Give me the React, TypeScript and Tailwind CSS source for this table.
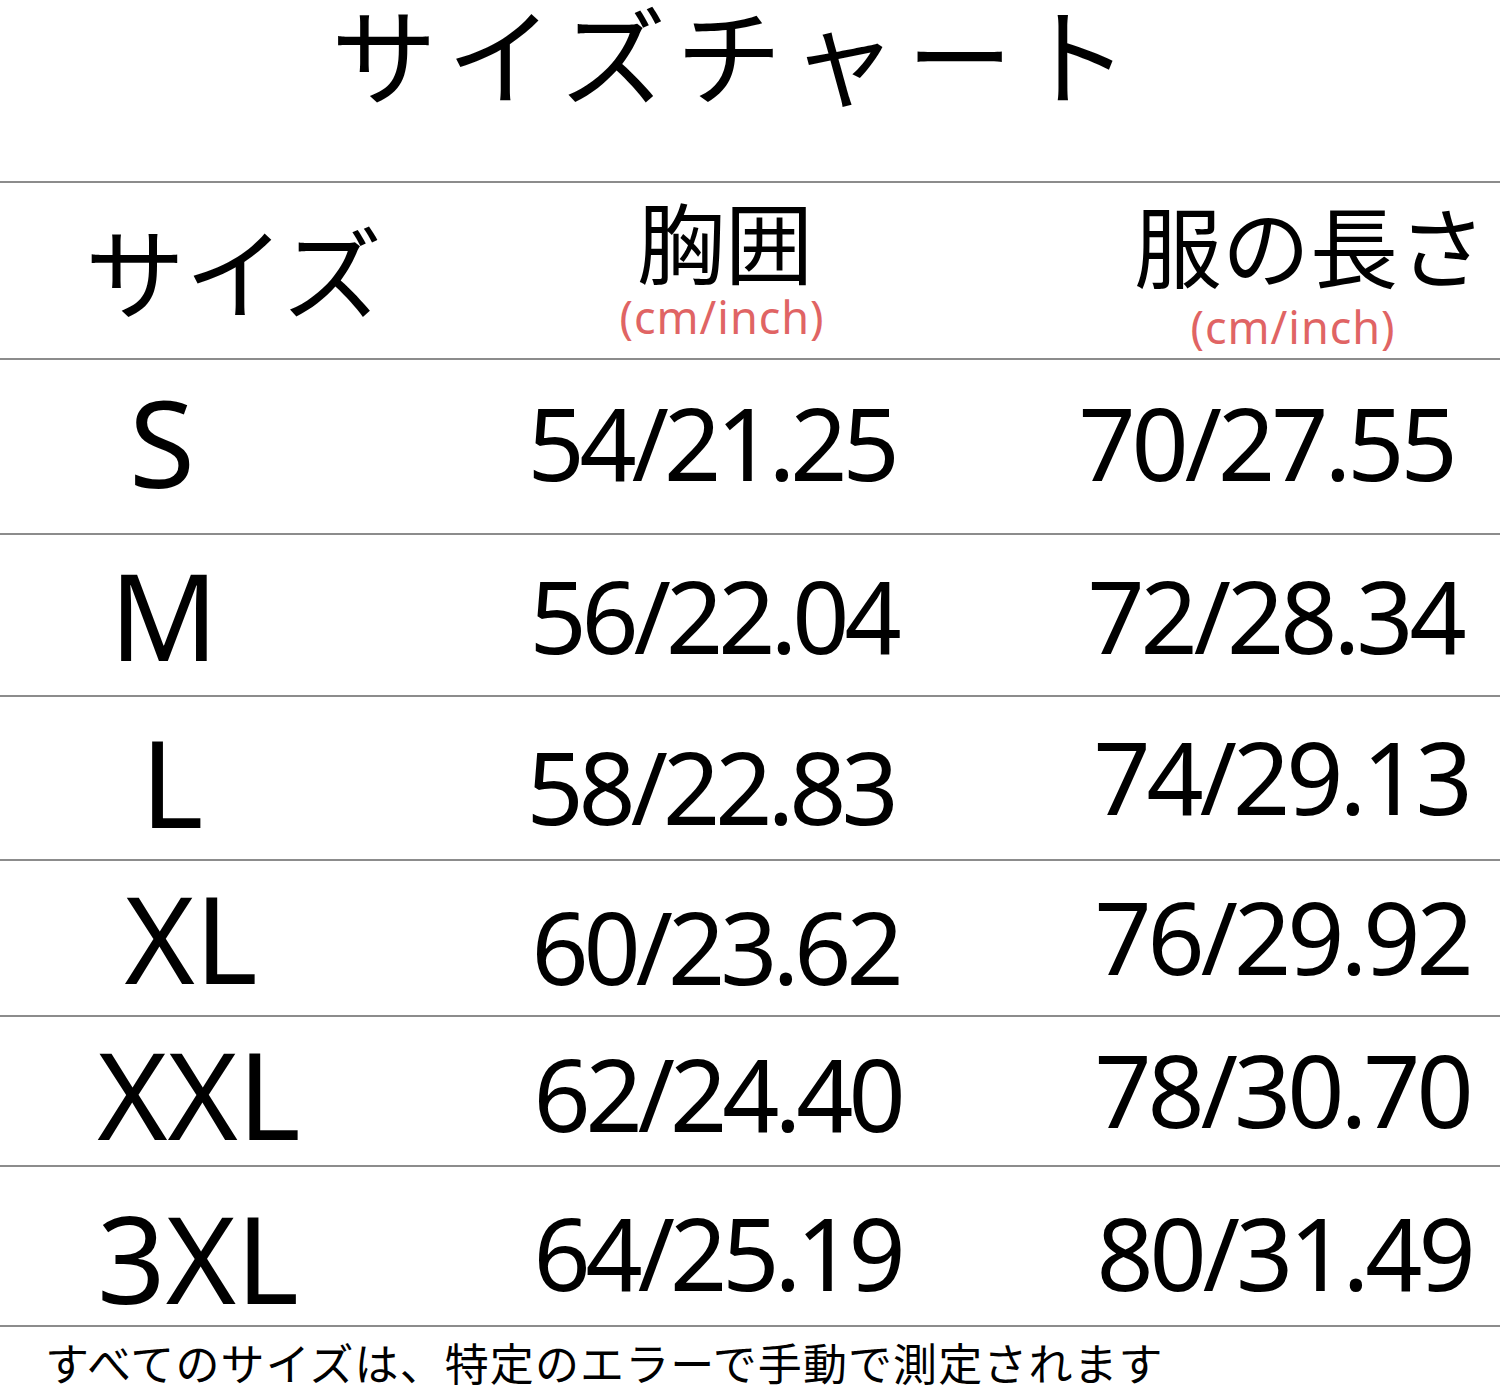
const jp = { fontFamily: '"Noto Sans CJK JP", sans-serif' };
const latin = { fontFamily: '"Noto Sans", sans-serif' };

type Row = { size: string; chest: string; length: string; h: string; sizeCls: string; chestCls: string; lenCls: string };

const rows: Row[] = [
  { size: 'S', chest: '54/21.25', length: '70/27.55', h: 'h-[173px]', sizeCls: 'pb-[10px]', chestCls: 'pb-[10px] pr-[8px]', lenCls: 'pb-[10px] pr-[38px]' },
  { size: 'M', chest: '56/22.04', length: '72/28.34', h: 'h-[160px]', sizeCls: 'pl-[4px]', chestCls: 'pr-[4px]', lenCls: 'pr-[20px]' },
  { size: 'L', chest: '58/22.83', length: '74/29.13', h: 'h-[162px]', sizeCls: 'pl-[20px] pt-[8px]', chestCls: 'pt-[16px] pr-[10px]', lenCls: 'pb-[4px] pr-[8px]' },
  { size: 'XL', chest: '60/23.62', length: '76/29.92', h: 'h-[154px]', sizeCls: 'pl-[58px]', chestCls: 'pt-[16px]', lenCls: 'pb-[4px] pr-[6px]' },
  { size: 'XXL', chest: '62/24.40', length: '78/30.70', h: 'h-[148px]', sizeCls: 'pl-[74px] pt-[6px]', chestCls: 'pt-[4px] pl-[4px]', lenCls: 'pb-[4px] pr-[6px]' },
  { size: '3XL', chest: '64/25.19', length: '80/31.49', h: 'h-[158px]', sizeCls: 'pl-[72px] pt-[24px]', chestCls: 'pt-[12px] pl-[4px]', lenCls: 'pt-[12px] pr-[2px]' },
];

function Line() {
  return <div className="h-[2px] w-full bg-[#8c8c8c]" />;
}

export default function App() {
  return (
    <div className="w-[1500px] h-[1389px] bg-white text-black overflow-hidden">
      {/* title */}
      <div className="h-[181px] flex justify-center pr-[30px]">
        <h1 style={jp} className="text-[106px] leading-[110px] tracking-[10px] font-normal -mt-[4px]">
          サイズチャート
        </h1>
      </div>
      <Line />

      {/* header row */}
      <div className="grid grid-cols-[360px_710px_430px] h-[175px]">
        <div style={jp} className="flex items-center justify-start pl-[85px] text-[100px] leading-none whitespace-nowrap pb-[4px]">
          サイズ
        </div>
        <div className="flex flex-col items-center pl-[20px] pt-[8px]">
          <div style={jp} className="text-[88px] leading-[96px]">胸囲</div>
          <div style={latin} className="text-[45px] leading-[48px] text-[#e06464] tracking-[1px] mt-[6px] pr-[6px]">
            (cm/inch)
          </div>
        </div>
        <div className="flex flex-col items-center pl-[20px] pt-[12px]">
          <div style={jp} className="text-[88px] leading-[96px] pl-[30px]">服の長さ</div>
          <div style={latin} className="text-[45px] leading-[48px] text-[#e06464] tracking-[1px] mt-[12px] pr-[4px]">
            (cm/inch)
          </div>
        </div>
      </div>
      <Line />

      {rows.map((r) => (
        <div key={r.size}>
          <div className={`grid grid-cols-[360px_710px_430px] ${r.h}`} style={latin}>
            <div className={`flex items-center justify-center pr-[36px] text-[120px] leading-none ${r.sizeCls}`}>{r.size}</div>
            <div className={`flex items-center justify-center text-[100px] leading-none tracking-[-5px] ${r.chestCls}`}>{r.chest}</div>
            <div className={`flex items-center justify-center text-[100px] leading-none tracking-[-4px] ${r.lenCls}`}>{r.length}</div>
          </div>
          <Line />
        </div>
      ))}

      {/* footer note */}
      <div style={jp} className="pl-[45px] pt-[10px] text-[44px] leading-[50px] tracking-[1.1px] whitespace-nowrap">
        すべてのサイズは、特定のエラーで手動で測定されます
      </div>
    </div>
  );
}
